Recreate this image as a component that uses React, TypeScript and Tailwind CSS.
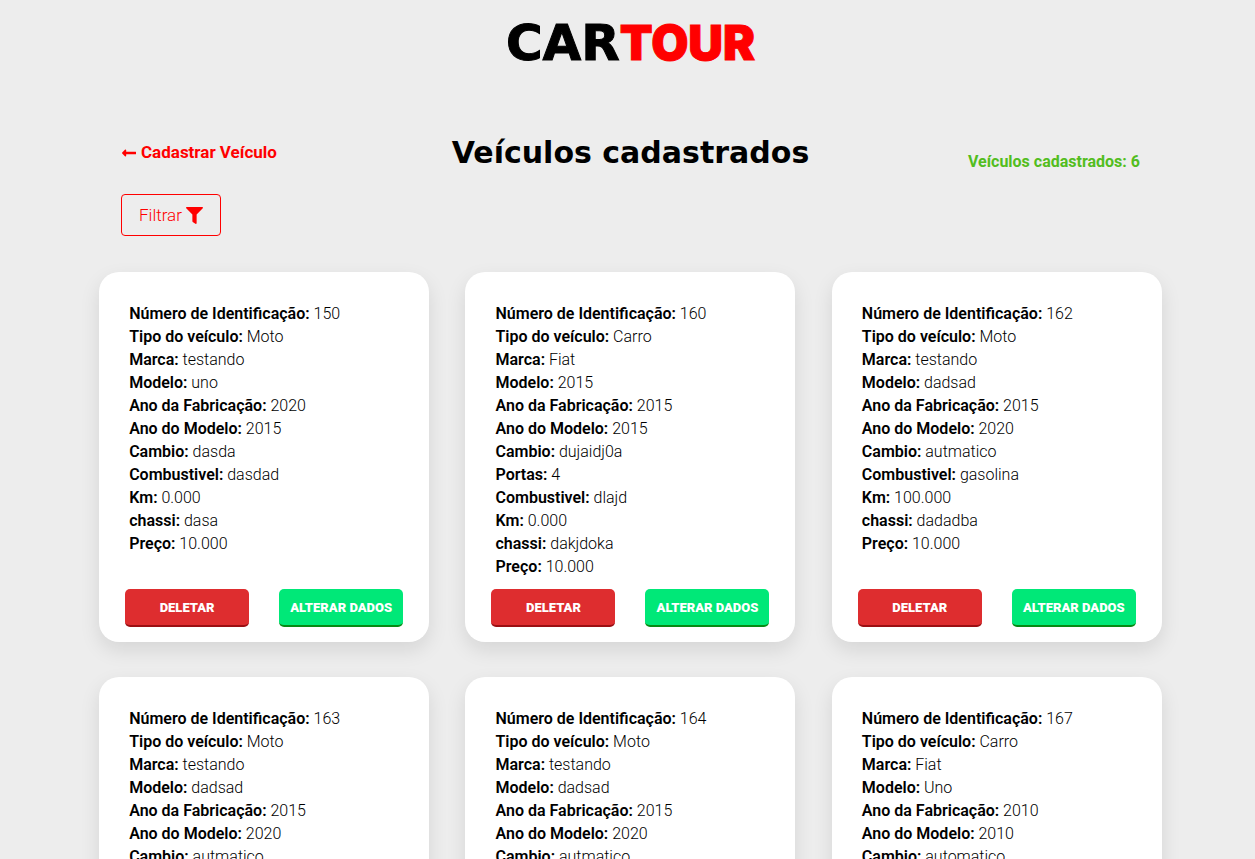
import { FaFilter, FaLongArrowAltLeft } from "react-icons/fa";

type Field = [label: string, value: string];

const vehicles: Field[][] = [
  [
    ["Número de Identificação", "150"],
    ["Tipo do veículo", "Moto"],
    ["Marca", "testando"],
    ["Modelo", "uno"],
    ["Ano da Fabricação", "2020"],
    ["Ano do Modelo", "2015"],
    ["Cambio", "dasda"],
    ["Combustivel", "dasdad"],
    ["Km", "0.000"],
    ["chassi", "dasa"],
    ["Preço", "10.000"],
  ],
  [
    ["Número de Identificação", "160"],
    ["Tipo do veículo", "Carro"],
    ["Marca", "Fiat"],
    ["Modelo", "2015"],
    ["Ano da Fabricação", "2015"],
    ["Ano do Modelo", "2015"],
    ["Cambio", "dujaidj0a"],
    ["Portas", "4"],
    ["Combustivel", "dlajd"],
    ["Km", "0.000"],
    ["chassi", "dakjdoka"],
    ["Preço", "10.000"],
  ],
  [
    ["Número de Identificação", "162"],
    ["Tipo do veículo", "Moto"],
    ["Marca", "testando"],
    ["Modelo", "dadsad"],
    ["Ano da Fabricação", "2015"],
    ["Ano do Modelo", "2020"],
    ["Cambio", "autmatico"],
    ["Combustivel", "gasolina"],
    ["Km", "100.000"],
    ["chassi", "dadadba"],
    ["Preço", "10.000"],
  ],
  [
    ["Número de Identificação", "163"],
    ["Tipo do veículo", "Moto"],
    ["Marca", "testando"],
    ["Modelo", "dadsad"],
    ["Ano da Fabricação", "2015"],
    ["Ano do Modelo", "2020"],
    ["Cambio", "autmatico"],
  ],
  [
    ["Número de Identificação", "164"],
    ["Tipo do veículo", "Moto"],
    ["Marca", "testando"],
    ["Modelo", "dadsad"],
    ["Ano da Fabricação", "2015"],
    ["Ano do Modelo", "2020"],
    ["Cambio", "autmatico"],
  ],
  [
    ["Número de Identificação", "167"],
    ["Tipo do veículo", "Carro"],
    ["Marca", "Fiat"],
    ["Modelo", "Uno"],
    ["Ano da Fabricação", "2010"],
    ["Ano do Modelo", "2010"],
    ["Cambio", "automatico"],
  ],
];

function VehicleCard({ fields }: { fields: Field[] }) {
  return (
    <article className="flex min-h-[370px] w-full max-w-[330px] flex-col justify-between rounded-[20px] bg-white px-[26px] pt-[30px] pb-[15px] shadow-[0_8px_20px_rgba(0,0,0,0.1)]">
      <dl className="pl-1 text-base leading-[23px] font-light">
        {fields.map(([label, value]) => (
          <div key={label}>
            <dt className="inline font-semibold">{label}:</dt> <dd className="inline">{value}</dd>
          </div>
        ))}
      </dl>
      <div className="flex justify-between text-[13px] font-black text-white">
        <button type="button" className="h-[38px] w-[124px] rounded-[5px] border-b-2 border-[#9b0f13] bg-[#de2d2f] pt-px uppercase">
          Deletar
        </button>
        <button type="button" className="h-[38px] w-[124px] rounded-[5px] border-b-2 border-[#078a14] bg-[#00e878] pt-px whitespace-nowrap uppercase">
          Alterar dados
        </button>
      </div>
    </article>
  );
}

export default function App() {
  return (
    <div className="min-h-screen bg-[#ededed] pl-[6px] font-['Roboto',sans-serif] text-black">
      <header className="flex h-[86px] items-center justify-center leading-none">
        <a href="#inicio" className="flex items-baseline [-webkit-text-stroke:1px_currentColor]">
          <span className="font-['DejaVu_Sans',sans-serif] text-[50px] font-bold">CAR</span>
          <span className="font-['Inter',sans-serif] text-[48px] font-black text-[#ff0000]">TOUR</span>
        </a>
      </header>

      <main className="mx-auto max-w-[1099px] pt-11">
        <div className="grid grid-cols-[1fr_auto_1fr] items-center px-10">
          <a href="#cadastrar" className="flex items-center gap-1 text-[17px] font-bold text-[#ff0000]">
            <FaLongArrowAltLeft className="size-4" aria-hidden="true" />
            Cadastrar Veículo
          </a>
          <h1 className="font-['DejaVu_Sans',sans-serif] text-[30px] leading-[46px] font-bold">Veículos cadastrados</h1>
          <p className="pt-[18px] text-right font-bold text-[#52bd20]">Veículos cadastrados: 6</p>
        </div>

        <div className="px-10 pt-[18px]">
          <button
            type="button"
            className="flex h-[42px] w-[100px] items-center justify-center gap-1 rounded border border-[#ff0000] pt-px text-[17px] font-light text-[#ff0000]"
          >
            Filtrar
            <FaFilter className="size-[17px]" aria-hidden="true" />
          </button>
        </div>

        <section className="grid grid-cols-3 justify-items-center gap-y-[35px] pt-9 pb-9" aria-label="Veículos cadastrados">
          {vehicles.map((fields) => (
            <VehicleCard key={fields[0][1]} fields={fields} />
          ))}
        </section>
      </main>
    </div>
  );
}
